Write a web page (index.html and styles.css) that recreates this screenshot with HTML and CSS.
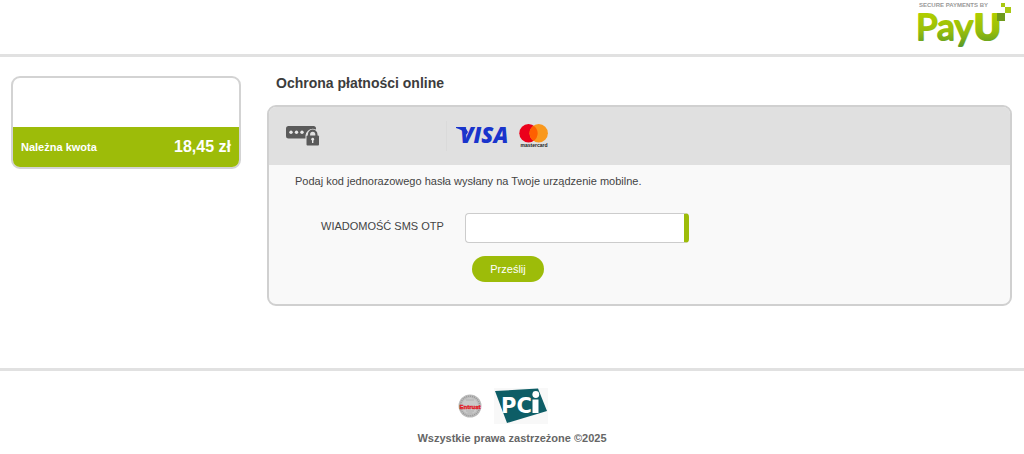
FILE: index.html
```html
<!DOCTYPE html>
<html lang="pl">
<head>
<meta charset="utf-8">
<meta name="viewport" content="width=device-width, initial-scale=1">
<title>Ochrona płatności online</title>
<link rel="stylesheet" href="styles.css">
</head>
<body>
<header class="topbar">
  <svg class="payu" viewBox="0 0 96 52" role="img" aria-label="PayU">
    <defs>
      <linearGradient id="leaf" gradientUnits="userSpaceOnUse" x1="0" y1="14" x2="0" y2="49">
        <stop offset="0" stop-color="#afcd00"/>
        <stop offset="0.5" stop-color="#96bd0c"/>
        <stop offset="1" stop-color="#4d942e"/>
      </linearGradient>
    </defs>
    <text class="payu-tag" x="3" y="7">SECURE PAYMENTS BY</text>
    <text class="payu-pay" x="0" y="40" fill="url(#leaf)" stroke="url(#leaf)">Pay</text>
    <text class="payu-u" x="58" y="40" fill="url(#leaf)" stroke="url(#leaf)">U</text>
    <path fill="#6f9a1c" d="M81 13h8v8h-8z"/>
    <path fill="#a9c813" d="M89 7h6v6h-6zM85 3h4v4h-4z"/>
  </svg>
</header>

<main class="content">
  <aside class="summary">
    <div class="summary-merchant"></div>
    <div class="summary-total">
      <span class="summary-label">Należna kwota</span>
      <span class="summary-amount">18,45 zł</span>
    </div>
  </aside>

  <section class="payment">
    <h1 class="title">Ochrona płatności online</h1>
    <div class="panel">
      <div class="panel-head">
        <svg class="otp-icon" viewBox="0 0 34 20" aria-hidden="true">
          <rect x="0" y="0" width="30" height="12.5" rx="2.5" fill="#5a5a5a"/>
          <g fill="#e8e8e8">
            <circle cx="5" cy="6.2" r="1.7"/><circle cx="10.500" cy="6.2" r="1.7"/><circle cx="16" cy="6.2" r="1.7"/>
          </g>
          <path d="M21 19.500V9.500A5.800 6 0 0 1 32.500 9.500V19.500Z" fill="#e0e0e0" stroke="#e0e0e0" stroke-width="3"/>
          <path d="M23 11V8.500a3.700 3.800 0 0 1 7.400 0V11" fill="none" stroke="#5a5a5a" stroke-width="2.200"/>
          <rect x="20.500" y="9.500" width="12.500" height="10" rx="1" fill="#5a5a5a"/>
          <circle cx="26.700" cy="13.200" r="1.400" fill="#e8e8e8"/>
          <path d="M26 13.500h1.400v3.500H26z" fill="#e8e8e8"/>
        </svg>
        <div class="cards">
          <svg class="visa" viewBox="0 0 54 20" role="img" aria-label="Visa">
            <text class="visa-text" x="4" y="17">VISA</text>
            <path d="M0 1h9l3 5-1.500 2.500C7 4.500 4 3 0 2z" fill="#1934cc"/>
          </svg>
          <svg class="mastercard" viewBox="0 0 30 24" role="img" aria-label="mastercard">
            <circle cx="9.500" cy="9.300" r="9.200" fill="#eb001b"/>
            <circle cx="19.700" cy="9.300" r="9.200" fill="#f9981d"/>
            <path d="M14.600 1.650a9.200 9.200 0 0 1 0 15.300a9.200 9.200 0 0 1 0-15.300z" fill="#ff5f00"/>
            <text class="mastercard-text" x="15" y="22.500">mastercard</text>
          </svg>
        </div>
      </div>
      <form class="panel-body">
        <p class="hint">Podaj kod jednorazowego hasła wysłany na Twoje urządzenie mobilne.</p>
        <div class="field">
          <label class="field-label" for="otp">WIADOMOŚĆ SMS OTP</label>
          <input class="field-input" id="otp" type="text" autocomplete="one-time-code">
        </div>
        <button class="submit" type="button">Prześlij</button>
      </form>
    </div>
  </section>
</main>

<footer class="footer">
  <div class="badges">
    <svg class="entrust" viewBox="0 0 24 24" role="img" aria-label="Entrust">
      <circle cx="12" cy="12" r="11.500" fill="#bdbdbd"/>
      <circle cx="12" cy="12" r="9.800" fill="none" stroke="#999" stroke-width="1.500" stroke-dasharray="1 1"/>
      <circle cx="12" cy="12" r="8" fill="#cacaca"/>
      <path d="M8 17h8M9.500 19h5M8 6h8" stroke="#aaa" stroke-width="0.800"/>
      <text class="entrust-text" x="12" y="14.500">Entrust</text>
    </svg>
    <svg class="pci" viewBox="0 0 54 36" role="img" aria-label="PCI">
      <path d="M0 0h54v36H0z" fill="#f8f8f8"/>
      <path d="M1 3L44 0.500 53 23 13 35z" fill="#0d5d66"/>
      <text class="pci-text" x="7" y="25">PC</text>
      <path d="M38.500 11.500h6V25h-6z" fill="#fff"/>
      <circle cx="41.800" cy="6.500" r="3.400" fill="#fff"/>
    </svg>
  </div>
  <p class="copyright">Wszystkie prawa zastrzeżone ©2025</p>
</footer>
</body>
</html>
```
FILE: styles.css
```css
* { box-sizing: border-box; }

body {
  margin: 0;
  background: #fff;
  color: #444;
  font-family: "Liberation Sans", Arial, sans-serif;
  font-size: 11px;
}

.topbar {
  display: flex;
  justify-content: flex-end;
  padding: 0 12px 2px;
  border-bottom: 3px solid #e1e1e1;
}
.payu { display: block; width: 96px; height: 52px; }
.payu-tag { font: bold 6px "Liberation Sans", sans-serif; fill: #999; }
.payu-pay { font: 36px Lato, sans-serif; stroke-width: 2px; stroke-linejoin: round; }
.payu-u { font: 900 36px Lato, sans-serif; stroke-width: 2px; stroke-linejoin: round; }

.content {
  display: flex;
  align-items: flex-start;
  gap: 26px;
  padding: 19px 12px 62px 11px;
}

.summary {
  flex: none;
  width: 230px;
  overflow: hidden;
  border: 2px solid #d3d3d3;
  border-radius: 9px;
}
.summary-merchant { height: 49px; }
.summary-total {
  display: flex;
  align-items: center;
  justify-content: space-between;
  height: 40px;
  padding: 0 8px;
  background: #9dbc09;
  color: #fff;
  font-weight: bold;
}
.summary-amount { font-size: 16px; }

.payment { flex: 1; min-width: 0; }
.title {
  margin: 0 0 14px;
  padding-left: 9px;
  color: #3c3c3c;
  font-size: 14px;
  line-height: 15px;
}

.panel {
  overflow: hidden;
  border: 2px solid #d0d0d0;
  border-radius: 9px;
  background: #f9f9f9;
}
.panel-head {
  display: flex;
  align-items: center;
  height: 58px;
  padding-left: 17px;
  background: #e0e0e0;
}
.otp-icon { width: 34px; height: 20px; margin-right: 126px; }
.cards {
  display: flex;
  align-items: center;
  gap: 9px;
  height: 30px;
  padding-left: 9px;
  border-left: 1px solid #dadada;
}
.visa { width: 54px; height: 20px; overflow: visible; }
.visa-text { font: italic 800 22px "Open Sans", sans-serif; fill: #1934cc; }
.mastercard { width: 30px; height: 24px; }
.mastercard-text {
  font: bold 5px "Liberation Sans", sans-serif;
  fill: #222;
  text-anchor: middle;
}

.panel-body { padding: 10px 26px 22px; }
.hint { margin: 0 0 25px; line-height: 13px; }
.field { display: flex; align-items: center; }
.field-label {
  width: 170px;
  padding: 0 0 4px 26px;
  white-space: nowrap;
}
.field-input {
  width: 224px;
  height: 30px;
  padding: 0 8px;
  border: 1px solid #ccc;
  border-right: 5px solid #9dbc09;
  border-radius: 4px;
  background: #fff;
  font: inherit;
}
.submit {
  display: block;
  width: 72px;
  height: 26px;
  margin: 13px 0 0 177px;
  padding: 0 0 1px;
  border: 0;
  border-radius: 13px;
  background: #9dbc09;
  color: #fff;
  font: inherit;
}

.footer {
  padding: 17px 0 16px;
  border-top: 3px solid #e1e1e1;
  text-align: center;
}
.badges {
  display: flex;
  align-items: center;
  justify-content: center;
  gap: 12px;
  padding-right: 18px;
}
.entrust { width: 24px; height: 24px; }
.entrust-text {
  font: bold 6px "Liberation Sans", sans-serif;
  fill: #e0202a;
  stroke: #e0202a;
  stroke-width: 0.4px;
  text-anchor: middle;
}
.pci { width: 54px; height: 36px; }
.pci-text { font: bold 21px "DejaVu Sans", sans-serif; fill: #fff; }
.copyright {
  margin: 8px 0 0;
  color: #666;
  font-weight: bold;
  line-height: 13px;
}
```
